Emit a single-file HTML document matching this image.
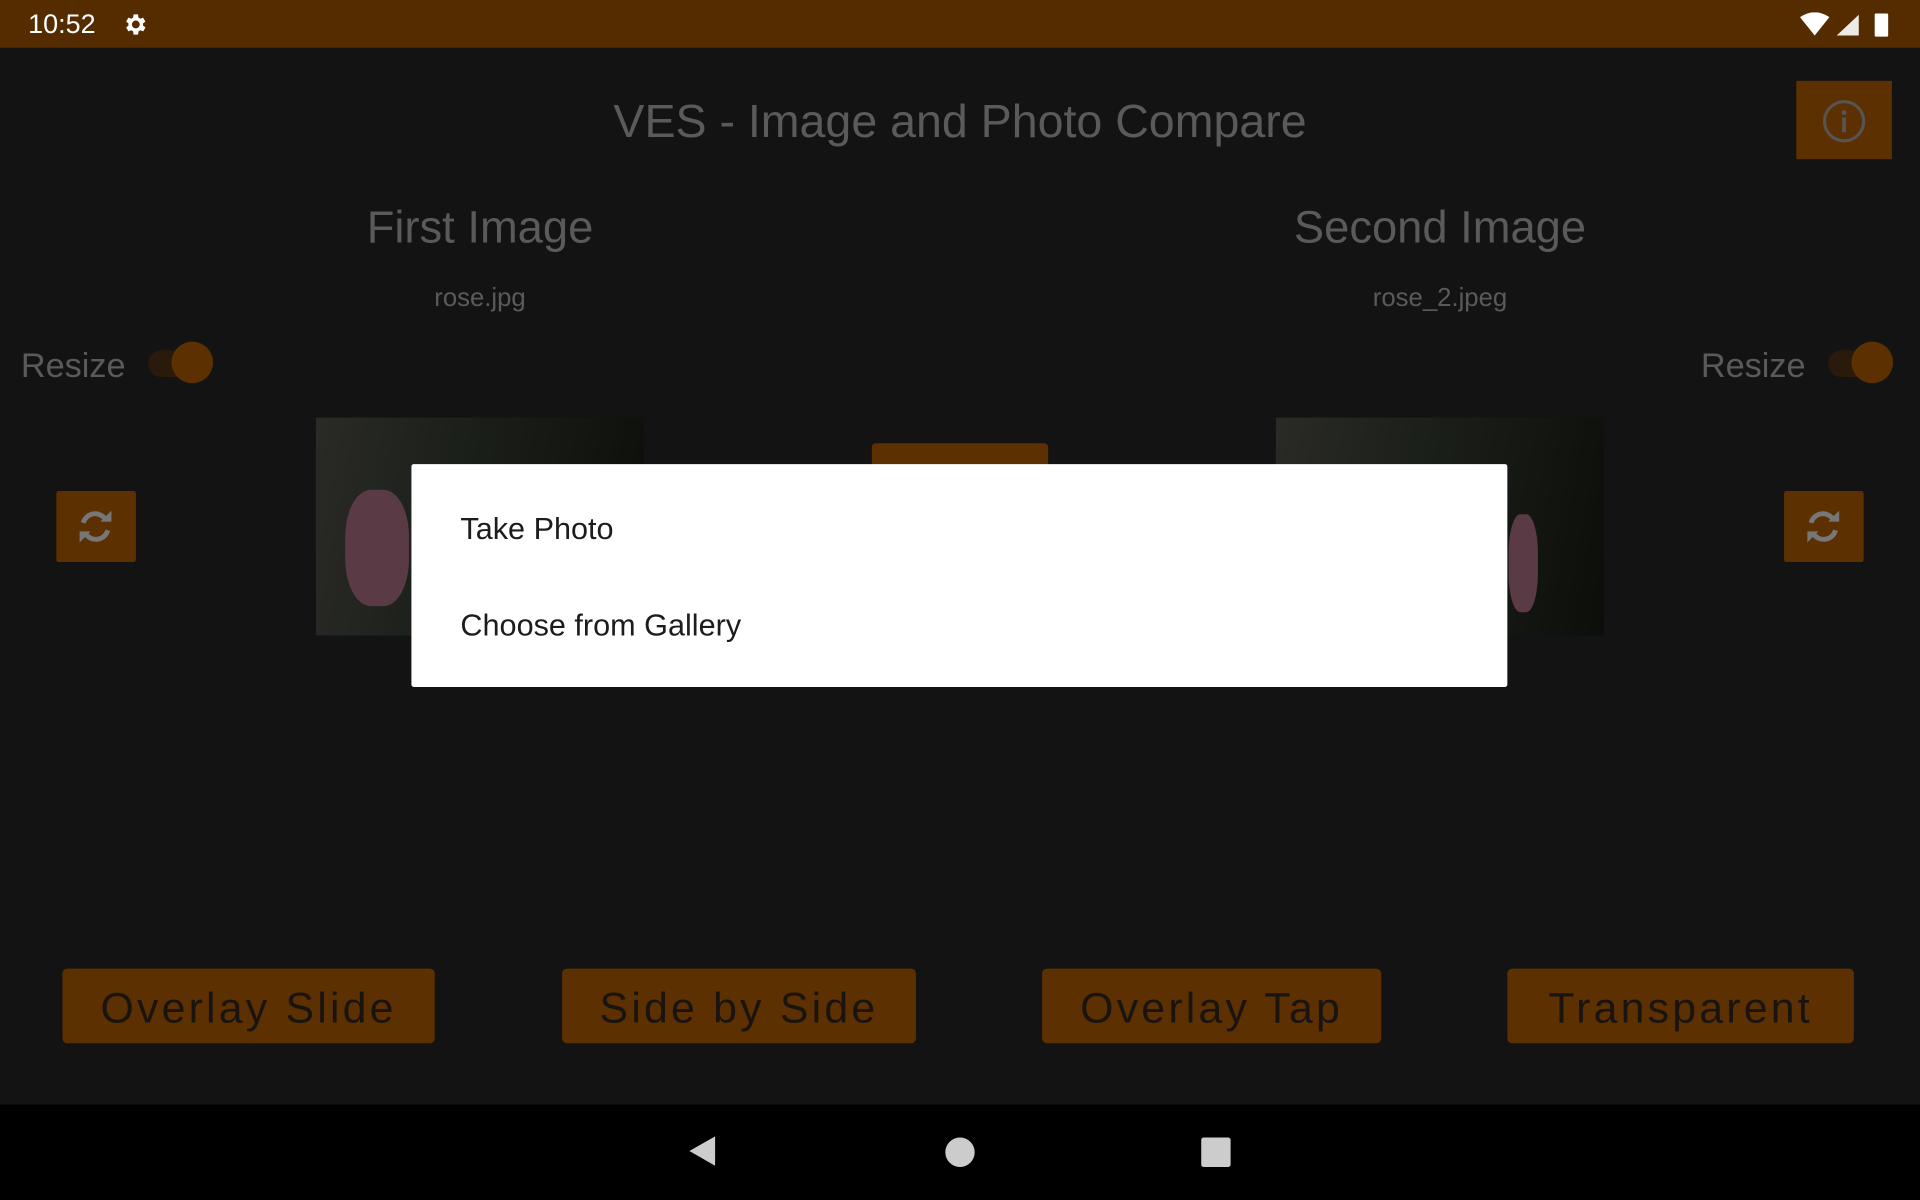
<!DOCTYPE html>
<html><head><meta charset="utf-8"><style>
html,body{margin:0;padding:0;width:1920px;height:1200px;overflow:hidden;background:#131313}
#w{position:absolute;left:0;top:0;width:1568px;height:980px;transform:scale(1.22449);transform-origin:0 0;font-family:"Liberation Sans",sans-serif;background:#131313}
.a{position:absolute}
.g{color:#5a5a5a}
.btn{position:absolute;top:791px;height:61px;background:#5c3000;border-radius:4px;color:#1a1410;font-size:35px;letter-spacing:2.6px;text-align:center;line-height:66px}
.rb{position:absolute;width:65px;height:58px;background:#5c3000;border-radius:2px}
</style></head><body><div id="w">
<div class="a" style="left:0;top:0;width:1568px;height:39px;background:#552c00"></div>
<div class="a" style="left:23px;top:7px;color:#fff;font-size:22px">10:52</div>
<svg class="a" style="left:99px;top:9px" width="22" height="22" viewBox="0 0 24 24"><path fill="#fff" d="M19.4 13a7.5 7.5 0 000-2l2.1-1.6-2-3.5-2.5 1a7 7 0 00-1.7-1L15 3h-4l-.4 2.9a7 7 0 00-1.7 1l-2.5-1-2 3.5L6.5 11a7.5 7.5 0 000 2l-2.1 1.6 2 3.5 2.5-1a7 7 0 001.7 1L11 21h4l.4-2.9a7 7 0 001.7-1l2.5 1 2-3.5zM13 15.5a3.5 3.5 0 110-7 3.5 3.5 0 010 7z"/></svg>
<svg class="a" style="left:1470px;top:10px" width="76" height="20" viewBox="0 0 76 20"><path fill="#fff" d="M0 4Q12-4 24 4L12 19z"/><path fill="#fff" d="M30 19L48 2V19z" opacity=".9"/><rect x="61" y="1" width="11" height="19" rx="1" fill="#fff"/></svg>
<div class="a g" style="left:0;width:1568px;top:79px;text-align:center;font-size:38px">VES - Image and Photo Compare</div>
<div class="a" style="left:1467px;top:66px;width:78px;height:64px;background:#5c3000"></div>
<svg class="a" style="left:1487px;top:80px" width="38" height="38" viewBox="0 0 38 38"><circle cx="19" cy="19" r="16" fill="none" stroke="#555" stroke-width="2.5"/><circle cx="19" cy="12" r="2" fill="#555"/><rect x="17.5" y="16" width="3" height="12" fill="#555"/></svg>
<div class="a g" style="left:192px;width:400px;top:165px;text-align:center;font-size:37px">First Image</div>
<div class="a g" style="left:976px;width:400px;top:165px;text-align:center;font-size:37px">Second Image</div>
<div class="a g" style="left:192px;width:400px;top:232px;text-align:center;font-size:21px">rose.jpg</div>
<div class="a g" style="left:976px;width:400px;top:232px;text-align:center;font-size:21px">rose_2.jpeg</div>
<div class="a g" style="left:17px;top:283px;font-size:28px">Resize</div>
<div class="a g" style="left:1389px;top:283px;font-size:28px">Resize</div>
<div class="a" style="left:121px;top:286px;width:40px;height:22px;border-radius:11px;background:#2a1a0c"></div>
<div class="a" style="left:140px;top:279px;width:34px;height:34px;border-radius:50%;background:#5c3000"></div>
<div class="a" style="left:1493px;top:286px;width:40px;height:22px;border-radius:11px;background:#2a1a0c"></div>
<div class="a" style="left:1512px;top:279px;width:34px;height:34px;border-radius:50%;background:#5c3000"></div>
<div class="a" style="left:258px;top:341px;width:268px;height:178px;background:linear-gradient(100deg,#2a2a26,#1c201a 40%,#0c0e0a)"></div>
<div class="a" style="left:282px;top:400px;width:52px;height:95px;border-radius:40%;background:#5a3a44"></div>
<div class="a" style="left:1042px;top:341px;width:268px;height:178px;background:linear-gradient(100deg,#2a2a26,#1c201a 40%,#0c0e0a)"></div>
<div class="a" style="left:1232px;top:420px;width:24px;height:80px;border-radius:40%;background:#5a3a44"></div>
<div class="a" style="left:712px;top:362px;width:144px;height:20px;background:#5c3000;border-radius:3px"></div>
<div class="rb" style="left:46px;top:401px"></div>
<div class="rb" style="left:1457px;top:401px"></div>
<svg class="a" style="left:60px;top:412px" width="36" height="36" viewBox="0 0 36 36"><g fill="none" stroke="#777" stroke-width="4"><path d="M8 15a10 10 0 0118-3"/><path d="M28 21a10 10 0 01-18 3"/></g><path fill="#777" d="M22 14h9V5z M14 22H5v9z"/></svg>
<svg class="a" style="left:1471px;top:412px" width="36" height="36" viewBox="0 0 36 36"><g fill="none" stroke="#777" stroke-width="4"><path d="M8 15a10 10 0 0118-3"/><path d="M28 21a10 10 0 01-18 3"/></g><path fill="#777" d="M22 14h9V5z M14 22H5v9z"/></svg>
<div class="a" style="left:336px;top:379px;width:895px;height:182px;background:#fff;border-radius:2px"></div>
<div class="a" style="left:376px;top:418px;font-size:25px;color:#1c1c1c">Take Photo</div>
<div class="a" style="left:376px;top:497px;font-size:25px;color:#1c1c1c">Choose from Gallery</div>
<div class="btn" style="left:51px;width:304px">Overlay Slide</div>
<div class="btn" style="left:459px;width:289px">Side by Side</div>
<div class="btn" style="left:851px;width:277px">Overlay Tap</div>
<div class="btn" style="left:1231px;width:283px">Transparent</div>
<div class="a" style="left:0;top:902px;width:1568px;height:78px;background:#000"></div>
<svg class="a" style="left:560px;top:925px" width="30" height="30" viewBox="0 0 30 30"><path fill="#ccc" d="M24 3V27L3 15z"/></svg>
<div class="a" style="left:772px;top:929px;width:24px;height:24px;border-radius:50%;background:#ccc"></div>
<div class="a" style="left:981px;top:929px;width:24px;height:24px;border-radius:2px;background:#ccc"></div>
</div></body></html>
